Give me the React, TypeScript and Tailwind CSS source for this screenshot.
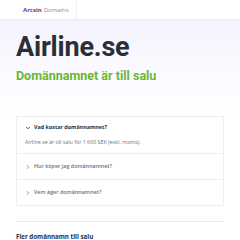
import { ChevronDown, ChevronRight } from 'lucide-react';

const faqs = [
  { q: 'Vad kostar domännamnet?', a: 'Airline.se är till salu för 1 600 SEK (exkl. moms).', open: true },
  { q: 'Hur köper jag domännamnet?', a: '', open: false },
  { q: 'Vem äger domännamnet?', a: '', open: false },
];

export default function App() {
  return (
    <div className="min-h-screen bg-white" style={{ fontFamily: '"Open Sans", sans-serif' }}>
      {/* Header */}
      <header className="h-[20px] bg-white border-b border-[#ececf2]">
        <div className="px-4 h-full flex">
          <div className="h-full flex items-center px-[7px] border-r border-[#f0f0f4] text-[6px] leading-none">
            <span className="font-bold text-[#5a3e96]">Arcsin</span>
            <span className="ml-[2px] text-[#8a8a99]">Domains</span>
          </div>
        </div>
      </header>

      {/* Hero */}
      <section className="bg-gradient-to-b from-[#f4f3fd] via-[#fafaff] to-white px-4 pt-[10px] pb-[32px]">
        <h1
          className="text-[27px] leading-[34px] font-bold text-[#2c2e35] tracking-[-0.2px]"
          style={{ fontFamily: 'Roboto, sans-serif' }}
        >
          Airline.se
        </h1>
        <p
          className="mt-[4px] text-[12.5px] leading-[16px] font-bold text-[#6cb52f]"
          style={{ fontFamily: 'Roboto, sans-serif' }}
        >
          Domännamnet är till salu
        </p>
      </section>

      {/* FAQ */}
      <main className="px-4">
        <div className="border border-[#eeeef2] rounded-[1px]">
          {faqs.map((f, i) => (
            <div key={i} className={i > 0 ? 'border-t border-[#eeeef2]' : ''}>
              <div className={`flex items-center gap-[3px] pl-[8px] ${f.open ? 'h-[21px] pt-[1px]' : 'h-[25px]'}`}>
                {f.open ? (
                  <ChevronDown size={6} strokeWidth={3.5} className="text-[#2c2e35]" />
                ) : (
                  <ChevronRight size={6} strokeWidth={3} className="text-[#777]" />
                )}
                <span className={`text-[5.4px] leading-none ${f.open ? 'text-[#2c2e35] font-bold' : 'text-[#6f6f78] font-semibold'}`}>
                  {f.q}
                </span>
              </div>
              {f.open && (
                <p className="px-[8px] pb-[7px] text-[5.3px] leading-[8px] text-[#70707a]">{f.a}</p>
              )}
            </div>
          ))}
        </div>

        <div className="mt-[15px] border-t border-[#e8e8ee] pt-[11px]">
          <h2 className="text-[6.2px] leading-[8px] font-bold text-[#2c2e35]">Fler domännamn till salu</h2>
        </div>
      </main>
    </div>
  );
}
